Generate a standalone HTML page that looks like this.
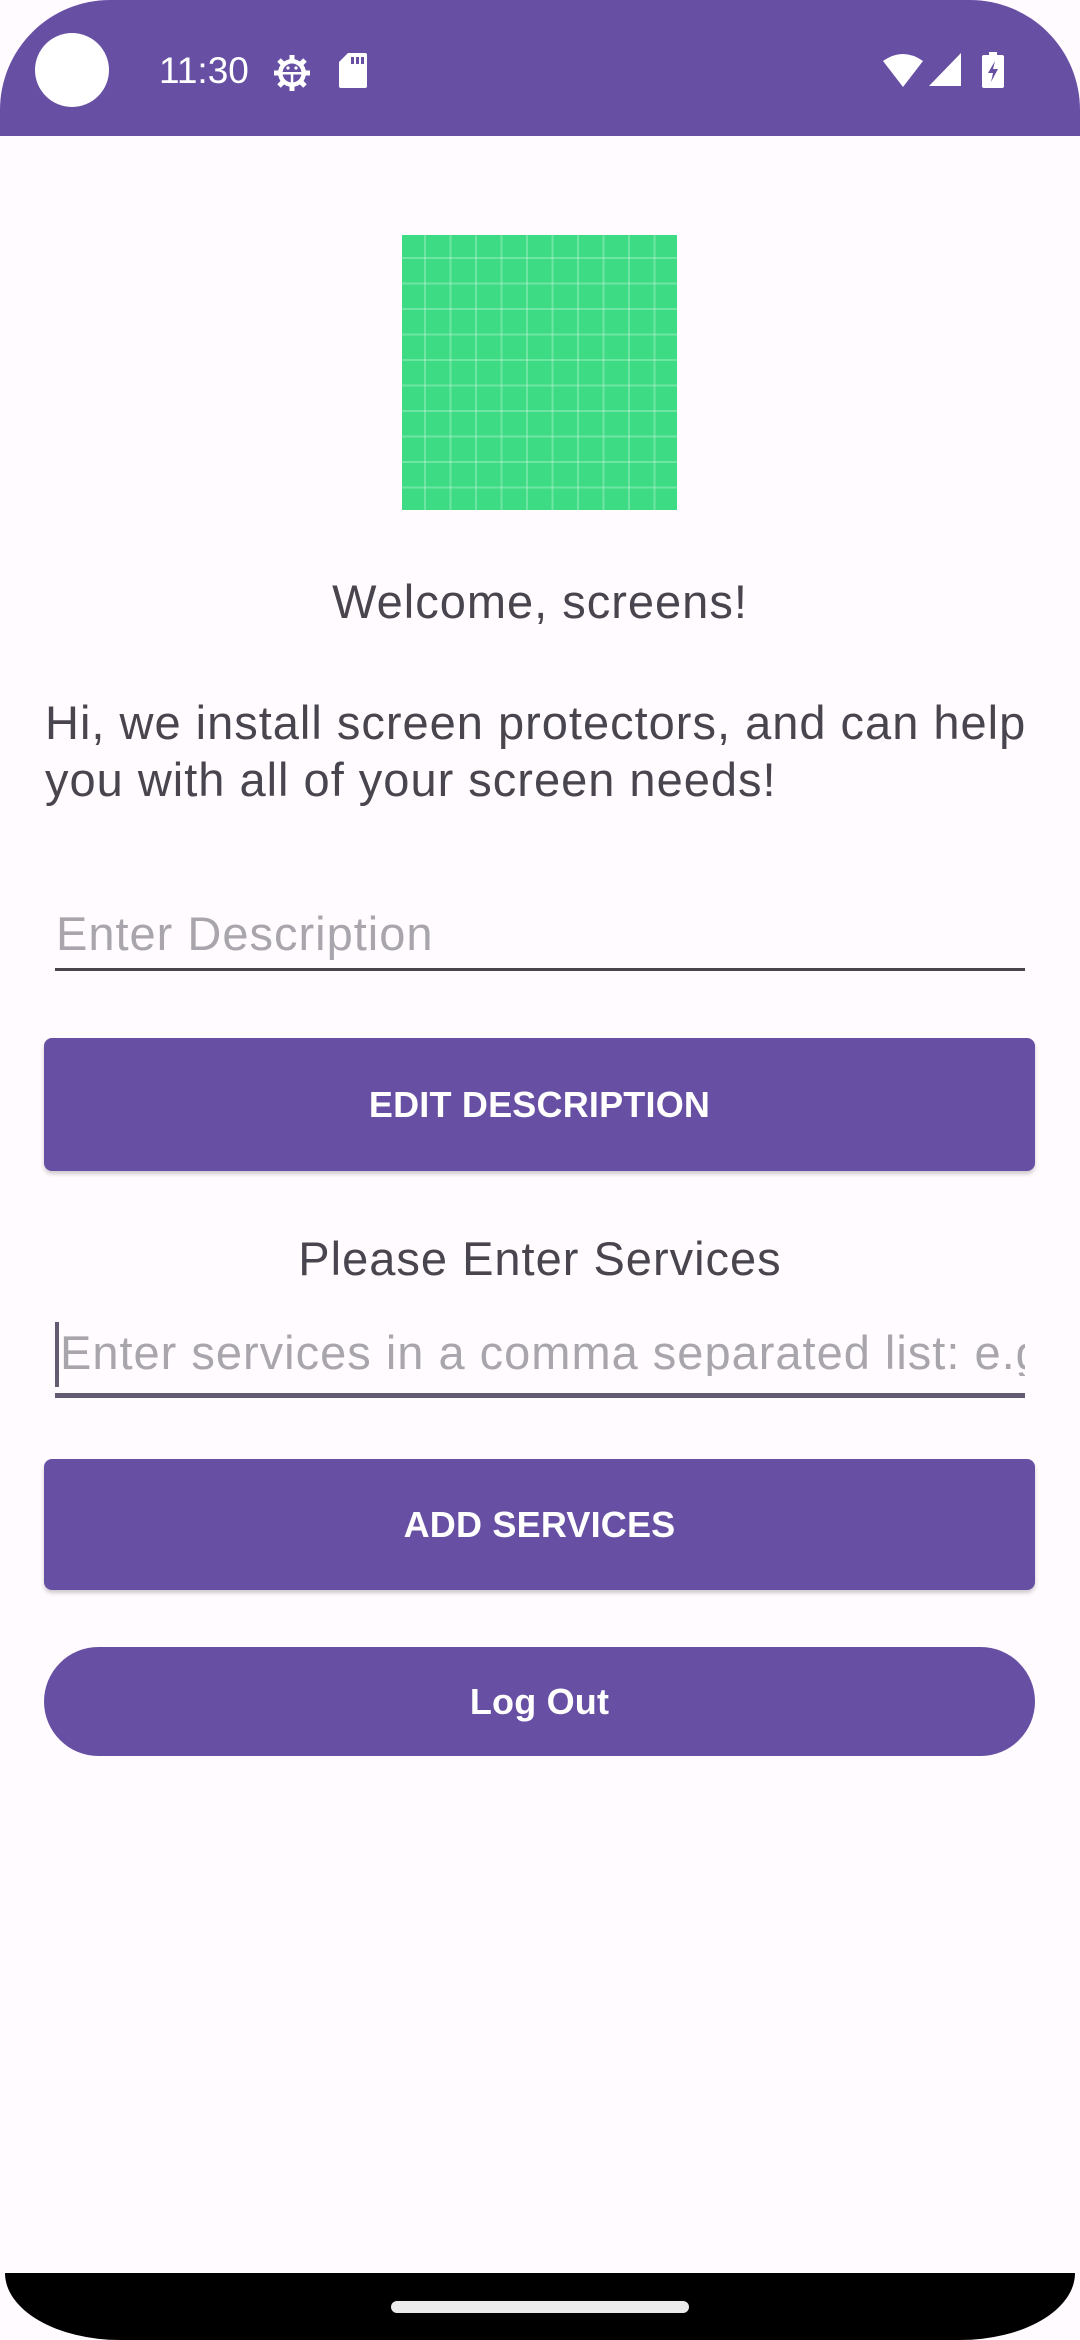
<!DOCTYPE html>
<html><head><meta charset="utf-8"><style>
*{margin:0;padding:0;box-sizing:border-box}
body{width:1080px;height:2340px;background:#fffbfe;position:relative;overflow:hidden;font-family:"Liberation Sans",sans-serif}
.abs{position:absolute}
.sb{left:0;top:0;width:1080px;height:136px;background:#6750a4;border-radius:110px 110px 0 0}
.t{color:#49454f;font-size:47px;letter-spacing:1px;white-space:nowrap;line-height:1}
.btn{left:44px;width:991px;background:#6750a4;color:#fff;font-weight:bold;font-size:36px;display:flex;align-items:center;justify-content:center;letter-spacing:0.2px}
.grid{left:402px;top:235px;width:275px;height:275px;background-color:#3ddc84;
background-image:linear-gradient(to right,rgba(255,255,255,.25) 2px,transparent 2px),linear-gradient(to bottom,rgba(255,255,255,.25) 2px,transparent 2px);
background-size:25.5px 25.5px;background-position:22px 22px}
</style></head><body>
<div class="abs sb"></div>
<div class="abs" style="left:35px;top:33px;width:74px;height:74px;border-radius:50%;background:#fff"></div>
<div class="abs" style="left:159px;top:52px;color:#fff;font-size:37px;line-height:1">11:30</div>
<svg class="abs" style="left:272px;top:53px" width="40" height="40" viewBox="0 0 40 40"><g fill="#fff"><circle cx="20" cy="20" r="14"/><g stroke="#fff" stroke-width="5"><line x1="20" y1="2" x2="20" y2="38"/><line x1="2" y1="20" x2="38" y2="20"/><line x1="7" y1="7" x2="33" y2="33"/><line x1="33" y1="7" x2="7" y2="33"/></g></g><circle cx="20" cy="20" r="9.5" fill="#6750a4"/><rect x="10" y="19" width="20" height="2.5" fill="#fff"/><rect x="18.8" y="20" width="2.5" height="10" fill="#fff"/><circle cx="16" cy="15" r="1.6" fill="#fff"/><circle cx="24" cy="15" r="1.6" fill="#fff"/></svg>
<svg class="abs" style="left:339px;top:53px" width="28" height="35" viewBox="0 0 28 35"><path d="M9 0H26a2 2 0 0 1 2 2V33a2 2 0 0 1-2 2H2a2 2 0 0 1-2-2V9z" fill="#fff"/><rect x="12" y="4" width="3" height="7" fill="#6750a4"/><rect x="17" y="4" width="3" height="7" fill="#6750a4"/><rect x="22" y="4" width="3" height="7" fill="#6750a4"/></svg>
<svg class="abs" style="left:883px;top:53px" width="40" height="34" viewBox="0 0 40 34"><path d="M0 8Q20-6 40 8L20 34z" fill="#fff"/></svg>
<svg class="abs" style="left:929px;top:53px" width="32" height="33" viewBox="0 0 32 33"><path d="M32 0V33H0z" fill="#fff"/></svg>
<svg class="abs" style="left:982px;top:52px" width="22" height="36" viewBox="0 0 22 36"><rect x="7" y="0" width="8" height="4" fill="#fff"/><rect x="0" y="3" width="22" height="33" rx="2" fill="#fff"/><path d="M13 9L6 21H11L9 30L16 17H11z" fill="#6750a4"/></svg>

<div class="abs grid"></div>
<div class="abs t" style="left:0;width:1080px;text-align:center;top:578px">Welcome, screens!</div>
<div class="abs t" style="left:45px;top:694px;line-height:57px">Hi, we install screen protectors, and can help<br>you with all of your screen needs!</div>
<div class="abs t" style="left:56px;top:910px;color:#a8a5ad">Enter Description</div>
<div class="abs" style="left:55px;top:968px;width:970px;height:3px;background:#49454f"></div>
<div class="abs btn" style="top:1038px;height:133px;border-radius:8px;box-shadow:0 3px 4px rgba(0,0,0,.2)">EDIT DESCRIPTION</div>
<div class="abs t" style="left:0;width:1080px;text-align:center;top:1235px">Please Enter Services</div>
<div class="abs" style="left:55px;top:1322px;width:4px;height:65px;background:#625b71"></div>
<div class="abs t" style="left:60px;top:1329px;width:965px;overflow:hidden;color:#a8a5ad">Enter services in a comma separated list: e.g.</div>
<div class="abs" style="left:55px;top:1393px;width:970px;height:5px;background:#625b71"></div>
<div class="abs btn" style="top:1459px;height:131px;border-radius:8px;box-shadow:0 3px 4px rgba(0,0,0,.2)">ADD SERVICES</div>
<div class="abs btn" style="top:1647px;height:109px;border-radius:55px">Log Out</div>

<div class="abs" style="left:5px;top:2273px;width:1070px;height:67px;background:#000;border-radius:0 0 115px 115px/0 0 67px 67px"></div>
<div class="abs" style="left:391px;top:2301px;width:298px;height:12px;border-radius:6px;background:#ebebeb"></div>
</body></html>
